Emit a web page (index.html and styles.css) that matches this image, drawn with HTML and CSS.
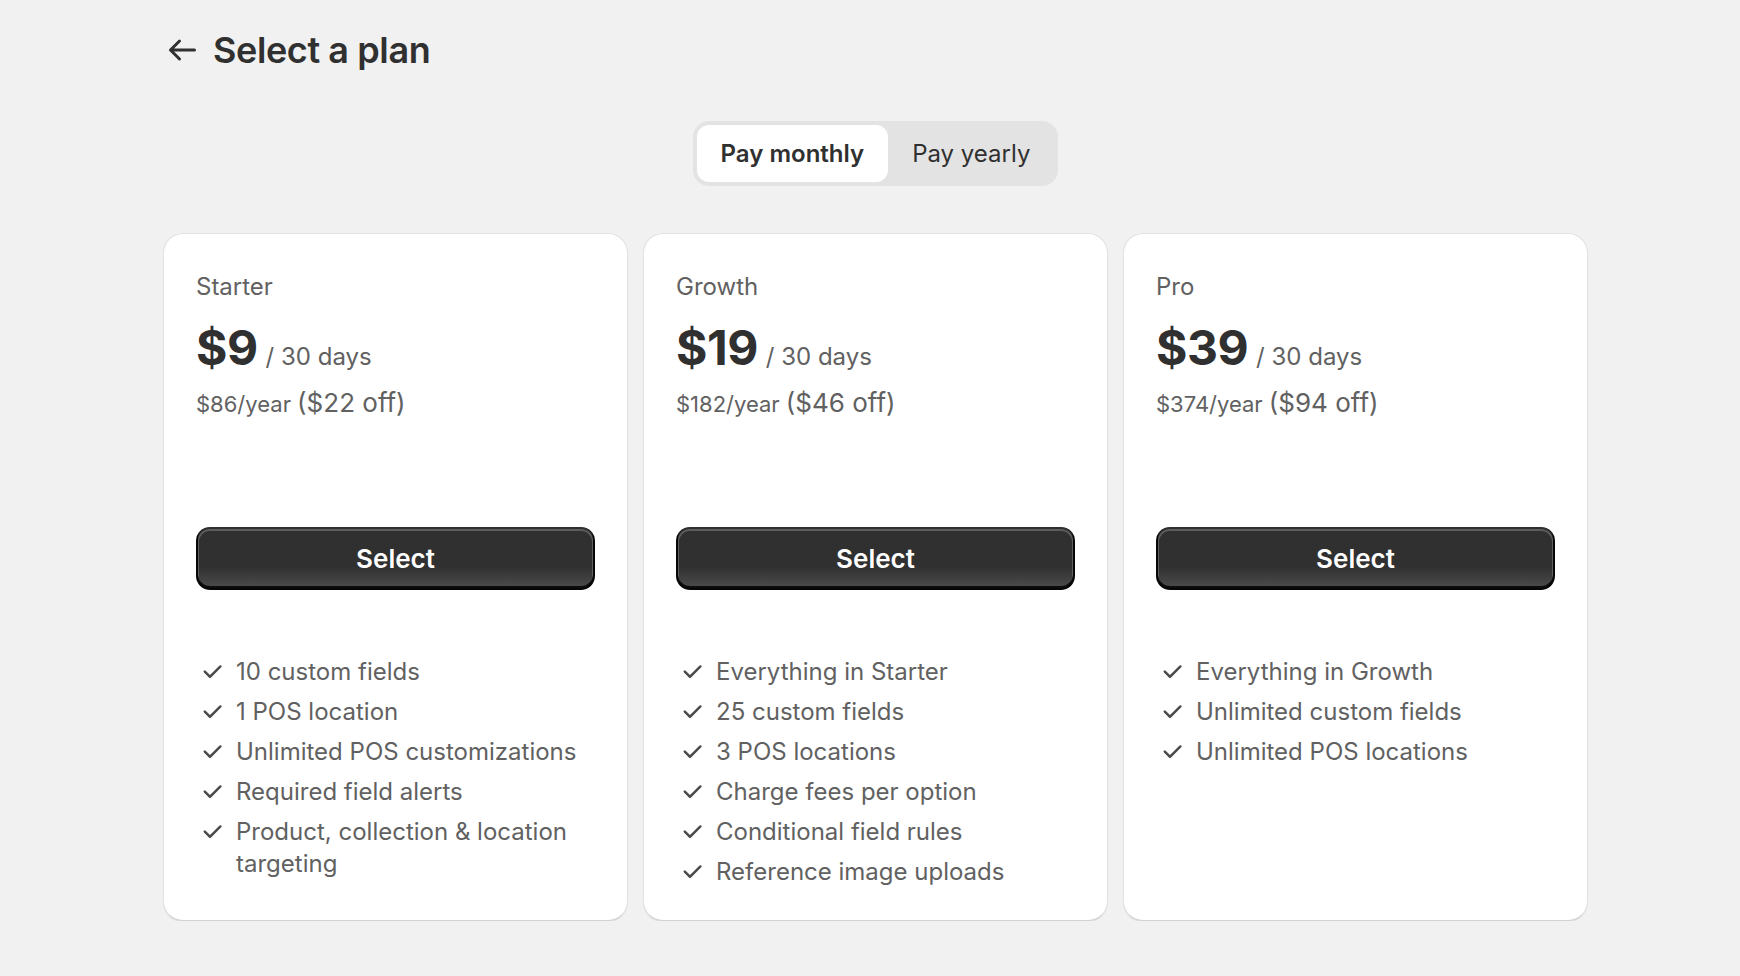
FILE: index.html
```html
<!DOCTYPE html>
<html lang="en">
<head>
<meta charset="utf-8">
<title>Select a plan</title>
<link rel="stylesheet" href="styles.css">
</head>
<body>
<div class="page">
  <header class="header">
    <button class="back" aria-label="Back">
      <svg width="30" height="24" viewBox="0 0 30 24" fill="none" stroke="#303030" stroke-width="3" stroke-linecap="round" stroke-linejoin="round"><path d="M27.5 12H3.5M12.5 3L3.5 12L12.5 21"/></svg>
    </button>
    <h1 class="title">Select a plan</h1>
  </header>

  <div class="toggle-wrap">
    <div class="toggle">
      <button class="seg seg-active">Pay monthly</button>
      <button class="seg">Pay yearly</button>
    </div>
  </div>

  <div class="plans">
    <section class="card">
      <div class="plan-name">Starter</div>
      <div class="price-row"><span class="price">$9</span><span class="period">/ 30 days</span></div>
      <div class="yearly">$86/year <span class="off">($22 off)</span></div>
      <button class="select">Select</button>
      <ul class="features">
        <li><svg class="check" viewBox="0 0 20 20"><path d="M15.78 5.97a.75.75 0 0 1 0 1.06l-6.5 6.5a.75.75 0 0 1-1.06 0l-3.25-3.25a.75.75 0 1 1 1.06-1.06l2.72 2.72 5.97-5.97a.75.75 0 0 1 1.06 0Z"/></svg><span>10 custom fields</span></li>
        <li><svg class="check" viewBox="0 0 20 20"><path d="M15.78 5.97a.75.75 0 0 1 0 1.06l-6.5 6.5a.75.75 0 0 1-1.06 0l-3.25-3.25a.75.75 0 1 1 1.06-1.06l2.72 2.72 5.97-5.97a.75.75 0 0 1 1.06 0Z"/></svg><span>1 POS location</span></li>
        <li><svg class="check" viewBox="0 0 20 20"><path d="M15.78 5.97a.75.75 0 0 1 0 1.06l-6.5 6.5a.75.75 0 0 1-1.06 0l-3.25-3.25a.75.75 0 1 1 1.06-1.06l2.72 2.72 5.97-5.97a.75.75 0 0 1 1.06 0Z"/></svg><span>Unlimited POS customizations</span></li>
        <li><svg class="check" viewBox="0 0 20 20"><path d="M15.78 5.97a.75.75 0 0 1 0 1.06l-6.5 6.5a.75.75 0 0 1-1.06 0l-3.25-3.25a.75.75 0 1 1 1.06-1.06l2.72 2.72 5.97-5.97a.75.75 0 0 1 1.06 0Z"/></svg><span>Required field alerts</span></li>
        <li><svg class="check" viewBox="0 0 20 20"><path d="M15.78 5.97a.75.75 0 0 1 0 1.06l-6.5 6.5a.75.75 0 0 1-1.06 0l-3.25-3.25a.75.75 0 1 1 1.06-1.06l2.72 2.72 5.97-5.97a.75.75 0 0 1 1.06 0Z"/></svg><span>Product, collection &amp; location targeting</span></li>
      </ul>
    </section>

    <section class="card">
      <div class="plan-name">Growth</div>
      <div class="price-row"><span class="price">$19</span><span class="period">/ 30 days</span></div>
      <div class="yearly">$182/year <span class="off">($46 off)</span></div>
      <button class="select">Select</button>
      <ul class="features">
        <li><svg class="check" viewBox="0 0 20 20"><path d="M15.78 5.97a.75.75 0 0 1 0 1.06l-6.5 6.5a.75.75 0 0 1-1.06 0l-3.25-3.25a.75.75 0 1 1 1.06-1.06l2.72 2.72 5.97-5.97a.75.75 0 0 1 1.06 0Z"/></svg><span>Everything in Starter</span></li>
        <li><svg class="check" viewBox="0 0 20 20"><path d="M15.78 5.97a.75.75 0 0 1 0 1.06l-6.5 6.5a.75.75 0 0 1-1.06 0l-3.25-3.25a.75.75 0 1 1 1.06-1.06l2.72 2.72 5.97-5.97a.75.75 0 0 1 1.06 0Z"/></svg><span>25 custom fields</span></li>
        <li><svg class="check" viewBox="0 0 20 20"><path d="M15.78 5.97a.75.75 0 0 1 0 1.06l-6.5 6.5a.75.75 0 0 1-1.06 0l-3.25-3.25a.75.75 0 1 1 1.06-1.06l2.72 2.72 5.97-5.97a.75.75 0 0 1 1.06 0Z"/></svg><span>3 POS locations</span></li>
        <li><svg class="check" viewBox="0 0 20 20"><path d="M15.78 5.97a.75.75 0 0 1 0 1.06l-6.5 6.5a.75.75 0 0 1-1.06 0l-3.25-3.25a.75.75 0 1 1 1.06-1.06l2.72 2.72 5.97-5.97a.75.75 0 0 1 1.06 0Z"/></svg><span>Charge fees per option</span></li>
        <li><svg class="check" viewBox="0 0 20 20"><path d="M15.78 5.97a.75.75 0 0 1 0 1.06l-6.5 6.5a.75.75 0 0 1-1.06 0l-3.25-3.25a.75.75 0 1 1 1.06-1.06l2.72 2.72 5.97-5.97a.75.75 0 0 1 1.06 0Z"/></svg><span>Conditional field rules</span></li>
        <li><svg class="check" viewBox="0 0 20 20"><path d="M15.78 5.97a.75.75 0 0 1 0 1.06l-6.5 6.5a.75.75 0 0 1-1.06 0l-3.25-3.25a.75.75 0 1 1 1.06-1.06l2.72 2.72 5.97-5.97a.75.75 0 0 1 1.06 0Z"/></svg><span>Reference image uploads</span></li>
      </ul>
    </section>

    <section class="card">
      <div class="plan-name">Pro</div>
      <div class="price-row"><span class="price">$39</span><span class="period">/ 30 days</span></div>
      <div class="yearly">$374/year <span class="off">($94 off)</span></div>
      <button class="select">Select</button>
      <ul class="features">
        <li><svg class="check" viewBox="0 0 20 20"><path d="M15.78 5.97a.75.75 0 0 1 0 1.06l-6.5 6.5a.75.75 0 0 1-1.06 0l-3.25-3.25a.75.75 0 1 1 1.06-1.06l2.72 2.72 5.97-5.97a.75.75 0 0 1 1.06 0Z"/></svg><span>Everything in Growth</span></li>
        <li><svg class="check" viewBox="0 0 20 20"><path d="M15.78 5.97a.75.75 0 0 1 0 1.06l-6.5 6.5a.75.75 0 0 1-1.06 0l-3.25-3.25a.75.75 0 1 1 1.06-1.06l2.72 2.72 5.97-5.97a.75.75 0 0 1 1.06 0Z"/></svg><span>Unlimited custom fields</span></li>
        <li><svg class="check" viewBox="0 0 20 20"><path d="M15.78 5.97a.75.75 0 0 1 0 1.06l-6.5 6.5a.75.75 0 0 1-1.06 0l-3.25-3.25a.75.75 0 1 1 1.06-1.06l2.72 2.72 5.97-5.97a.75.75 0 0 1 1.06 0Z"/></svg><span>Unlimited POS locations</span></li>
      </ul>
    </section>
  </div>
</div>
</body>
</html>
```

FILE: styles.css
```css
* { box-sizing: border-box; }

html, body {
  margin: 0;
  padding: 0;
  background: #f1f1f1;
}

body {
  font-family: Inter, "Noto Sans", "Liberation Sans", sans-serif;
  color: #303030;
  -webkit-font-smoothing: antialiased;
}

.page {
  padding: 0 152px 0 163px;
}

.header {
  display: flex;
  align-items: center;
  gap: 12px;
  height: 44px;
  margin-top: 28px;
}

.back {
  display: flex;
  align-items: center;
  justify-content: center;
  width: 38px;
  height: 38px;
  padding: 0;
  border: 0;
  background: transparent;
  cursor: pointer;
}

.title {
  margin: 0;
  font-size: 36px;
  line-height: 44px;
  font-weight: 600;
  color: #303030;
  letter-spacing: -0.4px;
}

.toggle-wrap {
  display: flex;
  justify-content: center;
  margin-top: 49px;
}

.toggle {
  display: flex;
  padding: 4px;
  background: #e3e3e3;
  border-radius: 16px;
}

.seg {
  height: 57px;
  padding: 0 24px;
  border: 0;
  border-radius: 12px;
  background: transparent;
  font-family: inherit;
  font-size: 24px;
  font-weight: 400;
  color: #303030;
  cursor: pointer;
}

.seg-active {
  background: #ffffff;
  font-weight: 600;
}

.plans {
  display: grid;
  grid-template-columns: repeat(3, 1fr);
  gap: 15px;
  margin-top: 47px;
}

.card {
  background: #ffffff;
  border: 1px solid #e2e2e2;
  border-bottom-color: #d2d2d2;
  border-radius: 20px;
  box-shadow: 0 1px 1px rgba(26, 26, 26, 0.08);
  padding: 37px 32px 32px;
  display: flex;
  flex-direction: column;
}

.plan-name {
  font-size: 24px;
  line-height: 32px;
  color: #616161;
}

.price-row {
  margin-top: 17px;
  line-height: 56px;
  display: flex;
  align-items: baseline;
  gap: 8px;
}

.price {
  font-size: 48px;
  font-weight: 700;
  color: #303030;
  letter-spacing: -0.5px;
}

.period {
  font-size: 24px;
  color: #616161;
}

.yearly {
  margin-top: 2px;
  font-size: 22px;
  line-height: 32px;
  color: #616161;
}

.off {
  font-size: 26px;
}

.select {
  margin-top: 107px;
  height: 63px;
  width: 100%;
  border: 0;
  border-radius: 14px;
  background: linear-gradient(180deg, rgba(48, 48, 48, 0) 63%, rgba(255, 255, 255, 0.15) 100%), #303030;
  box-shadow:
    inset 0 -2px 0 2px rgba(0, 0, 0, 0.85),
    inset 0 0 0 2px #303030,
    inset 0 1px 0 3px rgba(255, 255, 255, 0.22);
  color: #ffffff;
  font-family: inherit;
  font-size: 26px;
  font-weight: 600;
  cursor: pointer;
}

.features {
  list-style: none;
  margin: 66px 0 0;
  padding: 0;
  display: flex;
  flex-direction: column;
  gap: 8px;
}

.features li {
  display: flex;
  align-items: flex-start;
  gap: 8px;
  font-size: 24px;
  line-height: 32px;
  color: #616161;
}

.check {
  flex: none;
  width: 32px;
  height: 32px;
  fill: #4a4a4a;
}
```
